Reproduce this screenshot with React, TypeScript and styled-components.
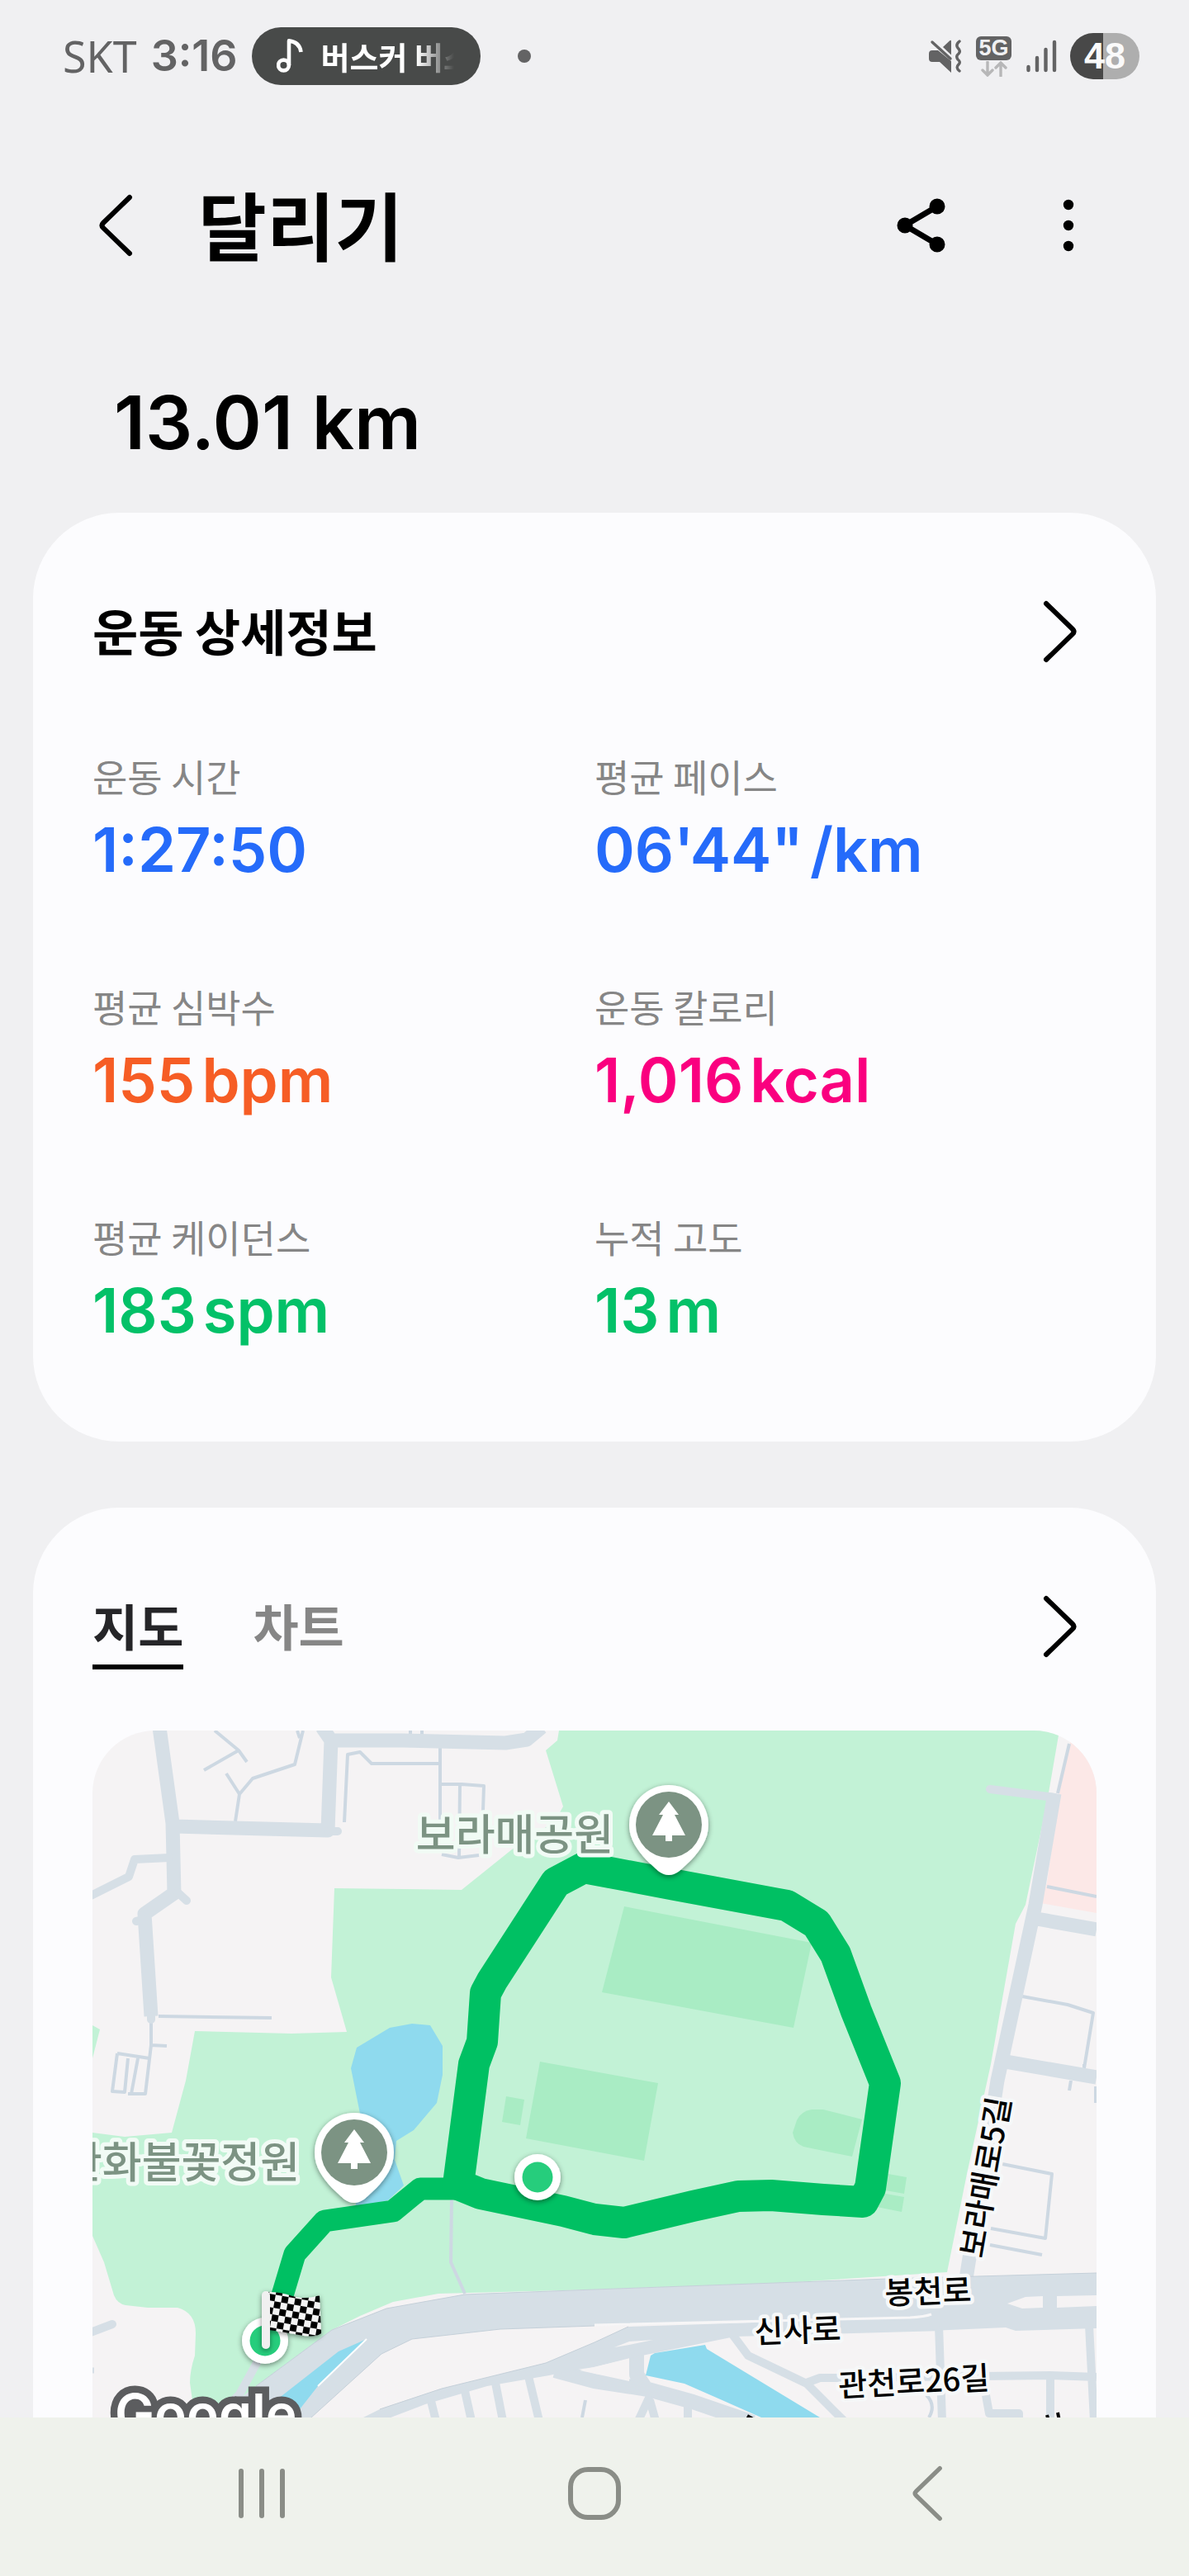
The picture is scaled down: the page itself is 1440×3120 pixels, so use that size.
import React, { useState } from "react";
import styled, { createGlobalStyle } from "styled-components";

const latin = `Inter, "Noto Sans CJK KR", sans-serif`;
const korean = `"Noto Sans CJK KR", "Noto Sans", sans-serif`;

const GlobalStyle = createGlobalStyle`
  *, *::before, *::after { box-sizing: border-box; }
  html, body { margin: 0; background: #f0f0f2; }
  body { font-family: ${korean}; color: #000; }
  button { font: inherit; color: inherit; border: 0; padding: 0; background: none; cursor: pointer; }
  h1, h2, p, dl, dt, dd { margin: 0; font-weight: inherit; }
  svg { display: block; }
`;

const Screen = styled.div`
  display: flex;
  flex-direction: column;
  height: 100vh;
`;

const StatusBar = styled.header`
  flex: none;
  display: flex;
  align-items: center;
  justify-content: space-between;
  height: 136px;
  padding: 0 60px 0 76px;
  color: #636364;
`;

const StatusGroup = styled.div<{ $gap: number }>`
  display: flex;
  align-items: center;
  gap: ${(p) => p.$gap}px;
`;

const Carrier = styled.span`
  font: 400 52px/64px "Noto Sans", sans-serif;
`;

const Clock = styled.time`
  font: 600 52px/64px ${latin};
`;

const NowPlaying = styled.div`
  display: flex;
  align-items: center;
  gap: 22px;
  width: 277px;
  height: 70px;
  padding: 0 32px 0 30px;
  border-radius: 35px;
  background: #484a49;
  color: #fff;
`;

const TrackName = styled.span`
  flex: 1;
  overflow: hidden;
  white-space: nowrap;
  font-size: 38px;
  line-height: 60px;
  font-weight: 700;
  mask-image: linear-gradient(to right, #000 72%, transparent);
`;

const Dot = styled.span`
  width: 16px;
  height: 16px;
  margin-left: 28px;
  border-radius: 50%;
  background: #636364;
`;

const Network = styled.div`
  display: flex;
  flex-direction: column;
  align-items: center;
  gap: 1px;
`;

const NetworkBadge = styled.span`
  width: 43px;
  border-radius: 6px;
  background: #636364;
  color: #f0f0f2;
  font: 700 27px/29px "Liberation Sans", sans-serif;
  text-align: center;
`;

const Battery = styled.span`
  width: 84px;
  margin-left: -2px;
  border-radius: 28px;
  background: linear-gradient(to right, #484848 48%, #aeaeae 48%);
  color: #fafafa;
  font: 700 45px/56px "Liberation Sans", sans-serif;
  text-align: center;
`;

const Content = styled.main`
  flex: 1;
  min-height: 0;
  overflow-y: auto;
  scrollbar-width: none;
`;

const TitleBar = styled.div`
  display: flex;
  align-items: center;
  height: 274px;
  padding: 0 102px 0 96px;
`;

const IconButton = styled.button`
  display: flex;
  align-items: center;
  justify-content: center;
  width: 88px;
  height: 88px;
`;

const Title = styled.h1`
  flex: 1;
  padding: 0 0 6px 56px;
  font-size: 90px;
  line-height: 120px;
  font-weight: 700;
`;

const TitleActions = styled.div`
  display: flex;
  gap: 90px;
`;

const Distance = styled.p`
  padding: 42px 138px 49px;
  font: 600 90px/120px ${latin};
`;

const Cards = styled.div`
  display: flex;
  flex-direction: column;
  gap: 80px;
  padding: 0 40px 80px;
`;

const Card = styled.section`
  padding: 100px 72px 115px;
  border-radius: 104px;
  background: #fcfcfe;
`;

const CardHeader = styled.div`
  display: flex;
  align-items: flex-start;
  justify-content: space-between;
`;

const CardTitle = styled.h2`
  font-size: 60px;
  line-height: 84px;
  font-weight: 700;
`;

const MoreLink = styled.a`
  display: flex;
  align-items: center;
  justify-content: center;
  width: 88px;
  height: 88px;
  color: #000;
`;

const Stats = styled.dl`
  display: grid;
  grid-template-columns: 1fr 1fr;
  row-gap: 115px;
  margin-top: 100px;
`;

const Stat = styled.div`
  display: flex;
  flex-direction: column;
  gap: 16px;
`;

const StatLabel = styled.dt`
  color: #868686;
  font-size: 46px;
  line-height: 60px;
`;

const StatValue = styled.dd<{ $color: string }>`
  display: flex;
  gap: 8px;
  color: ${(p) => p.$color};
  font: 600 74px/88px ${latin};
`;

const Tabs = styled.div`
  display: flex;
  gap: 84px;
`;

const Tab = styled.button<{ $active: boolean }>`
  padding-bottom: 6px;
  border-bottom: 6px solid ${(p) => (p.$active ? "#000" : "transparent")};
  color: ${(p) => (p.$active ? "#252528" : "#868686")};
  font-size: 60px;
  line-height: 84px;
  font-weight: 700;
`;

const MapFrame = styled.div`
  height: 912px;
  margin-top: 74px;
  border-radius: 76px;
  overflow: hidden;
  background: #f5f3f4;

  svg {
    width: 100%;
    height: 100%;
  }
`;

const PlaceLabel = styled.text`
  font: 500 52px ${korean};
  fill: #7c9383;
  stroke: #f1fbf5;
  stroke-width: 10px;
  stroke-linejoin: round;
  paint-order: stroke;
`;

const RoadLabel = styled.text`
  font: 500 38px ${korean};
  fill: #000;
  stroke: #f6f8f9;
  stroke-width: 9px;
  stroke-linejoin: round;
  paint-order: stroke;
`;

const MapBrand = styled.text`
  font: 600 64px ${latin};
  fill: #fff;
  stroke: #5c5d5f;
  stroke-width: 17px;
  paint-order: stroke;
`;

const NavBar = styled.nav`
  flex: none;
  display: flex;
  justify-content: space-between;
  height: 192px;
  padding: 48px 273px 0;
  background: #eff2ec;
  color: #8a8d87;
`;

const stats = [
  { label: "운동 시간", value: "1:27:50", unit: "", color: "#256bfa" },
  { label: "평균 페이스", value: "06'44\"", unit: "/km", color: "#256bfa" },
  { label: "평균 심박수", value: "155", unit: "bpm", color: "#f65d25" },
  { label: "운동 칼로리", value: "1,016", unit: "kcal", color: "#fa007f" },
  { label: "평균 케이던스", value: "183", unit: "spm", color: "#03c168" },
  { label: "누적 고도", value: "13", unit: "m", color: "#03c168" },
];

const Chevron = ({ back = false, size = 76, stroke = 6 }) => (
  <svg width={size / 2 + 6} height={size} viewBox="0 0 44 76" fill="none" stroke="currentColor"
    strokeWidth={stroke} strokeLinecap="round" strokeLinejoin="round" aria-hidden="true">
    <path d={back ? "M39 4L7 35Q4 38 7 41L39 72" : "M5 4L37 35Q40 38 37 41L5 72"} />
  </svg>
);

const MusicIcon = () => (
  <svg width="32" height="42" viewBox="0 0 32 42" fill="none" stroke="#fff" strokeWidth="4.6">
    <circle cx="8.5" cy="32" r="6.4" />
    <path d="M15 32V2.4Q28 4 29.5 16" strokeLinejoin="round" />
  </svg>
);

const MuteIcon = () => (
  <svg width="39" height="40" viewBox="0 0 39 40" fill="currentColor">
    <path d="M0 17Q0 13 4 13H11L27 26V40L13 27H4Q0 27 0 23Z" />
    <path d="M17 9L25 1.500Q27 0 27 2V18.500Z" />
    <path d="M4 3L26 23" stroke="currentColor" strokeWidth="3.400" strokeLinecap="round" />
    <path d="M37 2Q32 6 35 10Q39 14 36 17Q32 20 35 24Q39 27 36 30Q32 34 37 38" fill="none"
      stroke="currentColor" strokeWidth="3.400" strokeLinecap="round" />
  </svg>
);

const SignalIcon = () => (
  <svg width="37" height="40" viewBox="0 0 37 40" fill="none" stroke="currentColor" strokeWidth="4.400" strokeLinecap="round">
    <path d="M2.500 33V37M13 22V37M23.500 12V37M34 3V37" />
  </svg>
);

const DataArrows = () => (
  <svg width="32" height="19" viewBox="0 0 32 19" fill="none" stroke="#b7b7b8" strokeWidth="3.400" strokeLinecap="round">
    <path d="M8 1V17M2 11L8 17L14 11M24 18V2M18 8L24 2L30 8" />
  </svg>
);

const ParkPin = ({ x, y }: { x: number; y: number }) => (
  <g transform={`translate(${x} ${y})`}>
    <path filter="url(#pinShadow)" fill="#fff"
      d="M0 -48A48 48 0 0 1 48 0C48 18 38 31 27 43L13 56Q0 66 -13 56L-27 43C-38 31 -48 18 -48 0A48 48 0 0 1 0 -48Z" />
    <circle r="40" fill="#7c9383" />
    <path fill="#fff" d="M0 -28L12 -12H7L20 13H4V20H-4V13H-20L-7 -12H-12Z" />
  </g>
);

const EndPoint = ({ x, y }: { x: number; y: number }) => (
  <g transform={`translate(${x} ${y})`}>
    <circle r="28" fill="#fff" filter="url(#pinShadow)" />
    <circle r="18.500" fill="#26cd7c" />
  </g>
);

const CheckeredFlag = () => (
  <g filter="url(#pinShadow)">
    <path d="M213 680Q228 680 242 685T275 684L277 730Q270 736 250 732T214 726Z" fill="url(#checks)" />
    <path d="M210 684V744" stroke="#f0f0f0" strokeWidth="10" strokeLinecap="round" />
  </g>
);

const RouteMap = () => (
  <svg viewBox="0 0 1216 912" preserveAspectRatio="xMidYMin slice" role="img" aria-label="달리기 경로 지도">
    <defs>
      <filter id="pinShadow" x="-30%" y="-30%" width="160%" height="160%">
        <feDropShadow dx="0" dy="2" stdDeviation="3" floodColor="#000" floodOpacity="0.45" />
      </filter>
      <pattern id="checks" width="16" height="16" patternUnits="userSpaceOnUse" patternTransform="translate(214 682) rotate(10)">
        <rect width="16" height="16" fill="#f4f4f4" />
        <path d="M0 0H8V8H0ZM8 8H16V16H8Z" fill="#000" />
      </pattern>
    </defs>

    <g fill="#c2f2d6">
      <path d="M565 0L563 12L549 24L570 92L560 110L508 144L447 193L293 191L289 299L308 365L241 367L124 364L113 424L96 487L39 492L0 487V612L14 644L26 684Q30 694 40 696L67 699H103Q125 705 125 730L124 757Q118 775 118 790L124 832L150 832L198 794L290 726L324 709L364 692L419 682L608 677L837 669L1035 656L1059 537L1088 404L1118 234L1130 211L1156 87L1171 0Z" />
      <path d="M0 357L9 362L0 397Z" />
    </g>
    <path fill="#fce8e7" d="M1187 0H1216V221L1148 209L1156 184L1171 76Z" />
    <g fill="#a9ecc4">
      <path d="M644 213L871 257L849 360L617 317Z" />
      <path d="M542 401L685 427L668 521L525 494Z" />
      <path d="M501 443L523 447L518 478L496 474Z" />
      <path d="M932 471L885 459H871Q858 461 853 472L848 487Q850 500 861 504L920 516Z" />
      <path d="M958 536L986 541L983 561L955 556ZM955 560L983 565L980 583L950 577Z" />
    </g>
    <path fill="#8fdaee" d="M360 360L387 355L409 357L424 382V417L417 451L389 484L368 497L366 520L377 551L358 569L318 578L330 520L324 464L313 409L320 384Z" />

    <g fill="none" stroke="#cdd8e2" strokeWidth="4" strokeLinejoin="round">
      <path d="M148 0L177 24L187 38M177 24L135 48M255 0L245 41L194 58L178 77L162 52M178 77L173 110M248 0L251 9" />
      <path d="M305 111L309 29L324 26L338 40H421M421 21V147M423 65H447L474 67L473 97M445 66L444 154M423 150L443 154L468 151M385 0V6M399 0V6" />
      <path d="M80 346L217 348M71 350V381L64 440L43 440M71 381L90 382M30 391L69 397M30 391L24 437L39 438L43 397M55 397L47 440" />
      <path d="M1183 16L1169 76M1156 189L1216 201M1126 322L1181 332L1212 342L1201 409M1185 424L1183 436M1201 404V408M1215 431V451" />
      <path d="M1102 525L1162 537L1154 615L1088 603M1087 623L1150 635M435 567L434 644L451 682M597 811L593 832M1010 805Q1022 817 1013 832" />
    </g>

    <g stroke="#d6dfe6" fill="none" strokeLinejoin="round">
      <path strokeWidth="17" d="M81 -4L97 112L99 197L63 222L71 346M99 116L285 121L289 12L375 12L500 15L526 11L544 -4M278 -4L289 12" />
      <path strokeWidth="10" strokeLinecap="round" d="M285 122H297M103 196L114 206M62 229L53 231M93 154L51 156L44 177L-2 200M71 346V350M1087 71L1165 81M-2 729L24 719" />
      <path strokeWidth="17" d="M1165 76L1142 211L1096 424L1058 664M1138 227L1216 241M1100 400L1216 420" />
      <path strokeWidth="10" d="M200 764L178 804L150 832M410 812L416 836M451 800L459 836M488 790L497 836M528 782L541 836" />
      <path strokeWidth="18" d="M560 775L608 788L673 798L727 813L800 838M659 750V780L672 800" />
      <path strokeWidth="10" d="M675 806L661 836M675 811L682 836M721 815V836M774 730L794 757L865 791L912 838M862 791L881 784H908L1160 781L1216 783M1025 720L1029 836M1207 720L1213 836M1160 781V836M1082 805L1086 827H1122V836" />
      <path strokeWidth="7" d="M-2 775H2" />
    </g>
    <g fill="#d6dfe6">
      <path d="M150 832L198 794L290 726L356 700L451 683L608 677L964 664L1216 657V724L1118 727L1106 723L1015 727L1000 711L608 721L494 725L387 737L350 755L265 832L240 860H150Z" />
      <path d="M320 836L348 822L423 797L549 766L608 741L649 722L802 717L1015 707L1030 727L778 734L651 760L608 771L587 774L553 781L478 794L403 816L356 834Z" />
    </g>
    <path d="M198 794L290 726L356 700L451 683L608 677L964 664L1216 657M265 832L350 755L387 737L494 725L608 721M348 822L423 797L549 766L608 741L649 722" fill="none" stroke="#c5d0d9" strokeWidth="1" />
    <path d="M608 720L990 711Q1008 710 1016 707" fill="none" stroke="#f7f6f7" strokeWidth="3" />
    <g fill="#f5f3f4">
      <path d="M1108 694L1130 686L1151 685V699L1126 700ZM1168 685L1216 684V697L1168 699ZM632 747L650 740L679 738L650 744ZM590 775L650 761V788Z" />
    </g>
    <g fill="#8fdaee">
      <path d="M681 754L742 744L744 749L881 832L925 860H850L810 832L758 809L717 791L670 781L676 757Z" />
      <path d="M332 737L298 752L229 806L190 836H240L273 794Z" />
    </g>
    <path d="M332 737L273 794" stroke="#fff" strokeWidth="2" />

    <g fill="none" stroke="#00c063" strokeLinejoin="round" strokeLinecap="round">
      <path strokeWidth="27" d="M227 694L245 634L281 594L364 582L397 555H439" />
      <path strokeWidth="38" d="M443 550L462 404L472 377L476 318L484 303L561 184L595 166L706 187L841 212L877 234L900 271L925 340L960 427L942 554L933 571L885 568L822 563L782 564L727 576L644 596L608 592L570 582L470 561Z" />
    </g>

    <PlaceLabel x="631" y="145" textAnchor="end">보라매공원</PlaceLabel>
    <PlaceLabel x="251" y="542" textAnchor="end">한화불꽃정원</PlaceLabel>
    <ParkPin x={698} y={114} />
    <ParkPin x={317} y={511} />
    <EndPoint x={539} y={541} />
    <EndPoint x={209} y={739} />
    <CheckeredFlag />

    <RoadLabel transform="translate(1078 640) rotate(-80)">보라매로5길</RoadLabel>
    <RoadLabel transform="translate(960 695) rotate(-2)">봉천로</RoadLabel>
    <RoadLabel transform="translate(802 742) rotate(-2)">신사로</RoadLabel>
    <RoadLabel transform="translate(904 807) rotate(-3)">관천로26길</RoadLabel>
    <path d="M793 830L800 834M1156 829L1158 836M1169 826L1171 836" stroke="#000" strokeWidth="4" />
    <MapBrand x="27" y="850">Google</MapBrand>
  </svg>
);

export default function App() {
  const [tab, setTab] = useState("지도");

  return (
    <Screen>
      <GlobalStyle />
      <StatusBar>
        <StatusGroup $gap={17}>
          <Carrier>SKT</Carrier>
          <Clock>3:16</Clock>
          <NowPlaying>
            <MusicIcon />
            <TrackName>버스커 버스커</TrackName>
          </NowPlaying>
          <Dot />
        </StatusGroup>
        <StatusGroup $gap={18}>
          <MuteIcon />
          <Network>
            <NetworkBadge>5G</NetworkBadge>
            <DataArrows />
          </Network>
          <SignalIcon />
          <Battery>48</Battery>
        </StatusGroup>
      </StatusBar>

      <Content>
        <TitleBar>
          <IconButton type="button" aria-label="뒤로">
            <Chevron back />
          </IconButton>
          <Title>달리기</Title>
          <TitleActions>
            <IconButton type="button" aria-label="공유">
              <svg width="60" height="68" viewBox="0 0 60 68" stroke="#000" strokeWidth="7">
                <path d="M49 11L10 34L49 57" fill="none" />
                <circle cx="49" cy="11" r="6" />
                <circle cx="10" cy="34" r="6" />
                <circle cx="49" cy="57" r="6" />
              </svg>
            </IconButton>
            <IconButton type="button" aria-label="더보기">
              <svg width="14" height="64" viewBox="0 0 14 64">
                <circle cx="7" cy="7" r="6.200" />
                <circle cx="7" cy="32" r="6.200" />
                <circle cx="7" cy="57" r="6.200" />
              </svg>
            </IconButton>
          </TitleActions>
        </TitleBar>

        <Distance>13.01 km</Distance>

        <Cards>
          <Card>
            <CardHeader>
              <CardTitle>운동 상세정보</CardTitle>
              <MoreLink href="#details" aria-label="운동 상세정보 보기">
                <Chevron />
              </MoreLink>
            </CardHeader>
            <Stats>
              {stats.map((s) => (
                <Stat key={s.label}>
                  <StatLabel>{s.label}</StatLabel>
                  <StatValue $color={s.color}>
                    <span>{s.value}</span>
                    {s.unit && <span>{s.unit}</span>}
                  </StatValue>
                </Stat>
              ))}
            </Stats>
          </Card>

          <Card>
            <CardHeader>
              <Tabs role="tablist">
                {["지도", "차트"].map((name) => (
                  <Tab key={name} type="button" role="tab" aria-selected={tab === name}
                    $active={tab === name} onClick={() => setTab(name)}>
                    {name}
                  </Tab>
                ))}
              </Tabs>
              <MoreLink href="#map" aria-label="지도 보기">
                <Chevron />
              </MoreLink>
            </CardHeader>
            <MapFrame>
              <RouteMap />
            </MapFrame>
          </Card>
        </Cards>
      </Content>

      <NavBar>
        <IconButton type="button" aria-label="최근 앱">
          <svg width="64" height="64" viewBox="0 0 64 64" stroke="currentColor" strokeWidth="6" strokeLinecap="round">
            <path d="M7 5V59M32 5V59M57 5V59" />
          </svg>
        </IconButton>
        <IconButton type="button" aria-label="홈">
          <svg width="66" height="66" viewBox="0 0 66 66" fill="none" stroke="currentColor" strokeWidth="6">
            <rect x="4" y="4" width="58" height="58" rx="21" />
          </svg>
        </IconButton>
        <IconButton type="button" aria-label="뒤로 가기">
          <Chevron back size={68} />
        </IconButton>
      </NavBar>
    </Screen>
  );
}
